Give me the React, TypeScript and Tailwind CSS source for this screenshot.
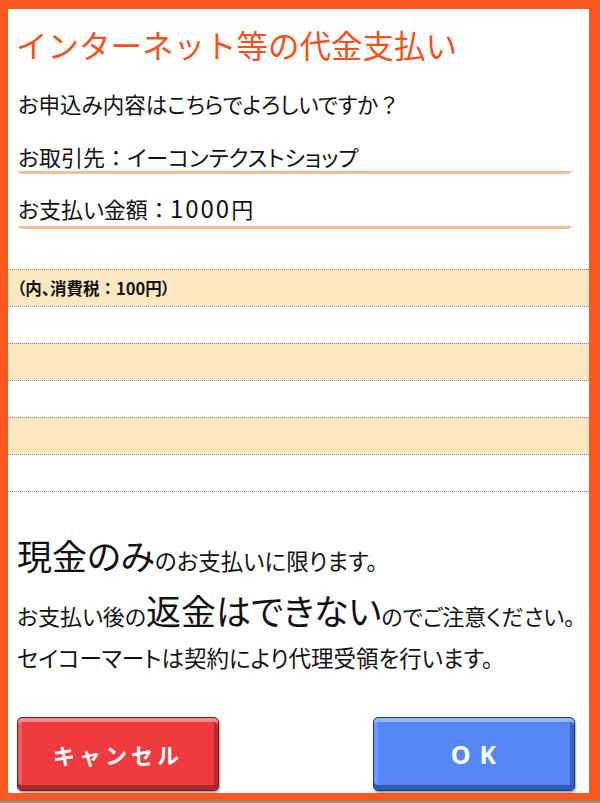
const jp = "font-['Noto_Sans_CJK_JP','Noto_Sans',sans-serif]";

const rows = [
  { bg: 'bg-[#fde7c0]', tax: true },
  { bg: 'bg-white', tax: false },
  { bg: 'bg-[#fde7c0]', tax: false },
  { bg: 'bg-white', tax: false },
  { bg: 'bg-[#fde7c0]', tax: false },
  { bg: 'bg-white', tax: false },
];

// 全角幅のまま出したい記号
function Full({ children }: { children: string }) {
  return <span className="[font-feature-settings:normal]">{children}</span>;
}

function Underline() {
  return (
    <div className="ml-[9px] mr-[16px] h-[3px] bg-[#f8bd94] [clip-path:polygon(0_0,100%_0,99.3%_100%,0.7%_100%)]" />
  );
}

export default function App() {
  return (
    <div className={`w-[600px] h-[803px] bg-[#8e979a] ${jp}`}>
      <div className="h-[801px] border-l-[8px] border-t-[9px] border-r-[11px] border-b-[8px] border-[#f9591f] bg-white flex flex-col text-[#111]">
        {/* タイトル */}
        <div className="mt-[17px] h-[37px] pl-[8px] text-[31.5px] leading-[37px] text-[#f4511e] whitespace-nowrap">
          インターネット等の代金支払い
        </div>

        <div className="mt-[26px] h-[30px] pl-[10px] text-[21.5px] leading-[30px] [font-feature-settings:'palt'] whitespace-nowrap">
          お申込み内容はこちらでよろしいですか<Full>？</Full>
        </div>

        {/* お取引先 / 金額 */}
        <div className="mt-[22px] h-[30px] pl-[10px] text-[22px] leading-[30px] [font-feature-settings:'palt'] whitespace-nowrap">
          お取引先<Full>：</Full>イーコンテクストショップ
        </div>
        <Underline />
        <div className="mt-[19px] h-[30px] pl-[10px] text-[22px] leading-[30px] [font-feature-settings:'palt'] whitespace-nowrap">
          お支払い金額<Full>：</Full>
          <span className="text-[24px] tracking-[2px]">1000</span>円
        </div>
        <div className="mt-[3px]">
          <Underline />
        </div>

        {/* 明細 */}
        <div className="mt-[40px] border-b border-dotted border-[#7f8790]">
          {rows.map((r, i) => (
            <div
              key={i}
              className={`h-[37px] border-t border-dotted border-[#7f8790] ${r.bg} flex items-center pl-[9px] text-[16.5px] font-bold [font-feature-settings:'palt'] whitespace-nowrap`}
            >
              {r.tax && (
                <>
                  （内、消費税<Full>：</Full>100円）
                </>
              )}
            </div>
          ))}
        </div>

        {/* 注意事項 */}
        <div className="mt-[41px] h-[44px] pl-[9px] leading-[44px] [font-feature-settings:'palt'] whitespace-nowrap">
          <span className="text-[35px]">現金のみ</span>
          <span className="text-[22.5px]">のお支払いに限ります。</span>
        </div>
        <div className="mt-[11px] h-[44px] pl-[9px] leading-[44px] [font-feature-settings:'palt'] whitespace-nowrap">
          <span className="text-[22px]">お支払い後の</span>
          <span className="text-[35px]">返金はできない</span>
          <span className="text-[22px]">のでご注意ください。</span>
        </div>
        <div className="mt-[10px] h-[30px] pl-[9px] text-[22.5px] leading-[30px] [font-feature-settings:'palt'] whitespace-nowrap">
          セイコーマートは契約により代理受領を行います。
        </div>

        {/* ボタン */}
        <div className="mt-[45px] flex justify-between pl-[9px] pr-[14px]">
          <button className="w-[202px] h-[74px] rounded-[5px] border border-[#6e1c1e] bg-[#ef3a3e] shadow-[inset_0_4px_0_#f8898b,inset_0_-5px_0_#a8282b,inset_4px_0_0_#f15a5d,inset_-4px_0_0_#b72d30,1px_2px_2px_rgba(0,0,0,0.35)] text-white text-[22px] font-bold tracking-[0.18em] leading-none">
            キャンセル
          </button>
          <button className="w-[202px] h-[74px] rounded-[5px] border border-[#1f3a78] bg-[#5587f4] shadow-[inset_0_4px_0_#94b7fb,inset_0_-5px_0_#3459b0,inset_4px_0_0_#6b97f6,inset_-4px_0_0_#3c63bd,1px_2px_2px_rgba(0,0,0,0.35)] text-white text-[25px] font-bold tracking-[0.05em] leading-none font-['Noto_Sans',sans-serif]">
            O K
          </button>
        </div>
      </div>
    </div>
  );
}
